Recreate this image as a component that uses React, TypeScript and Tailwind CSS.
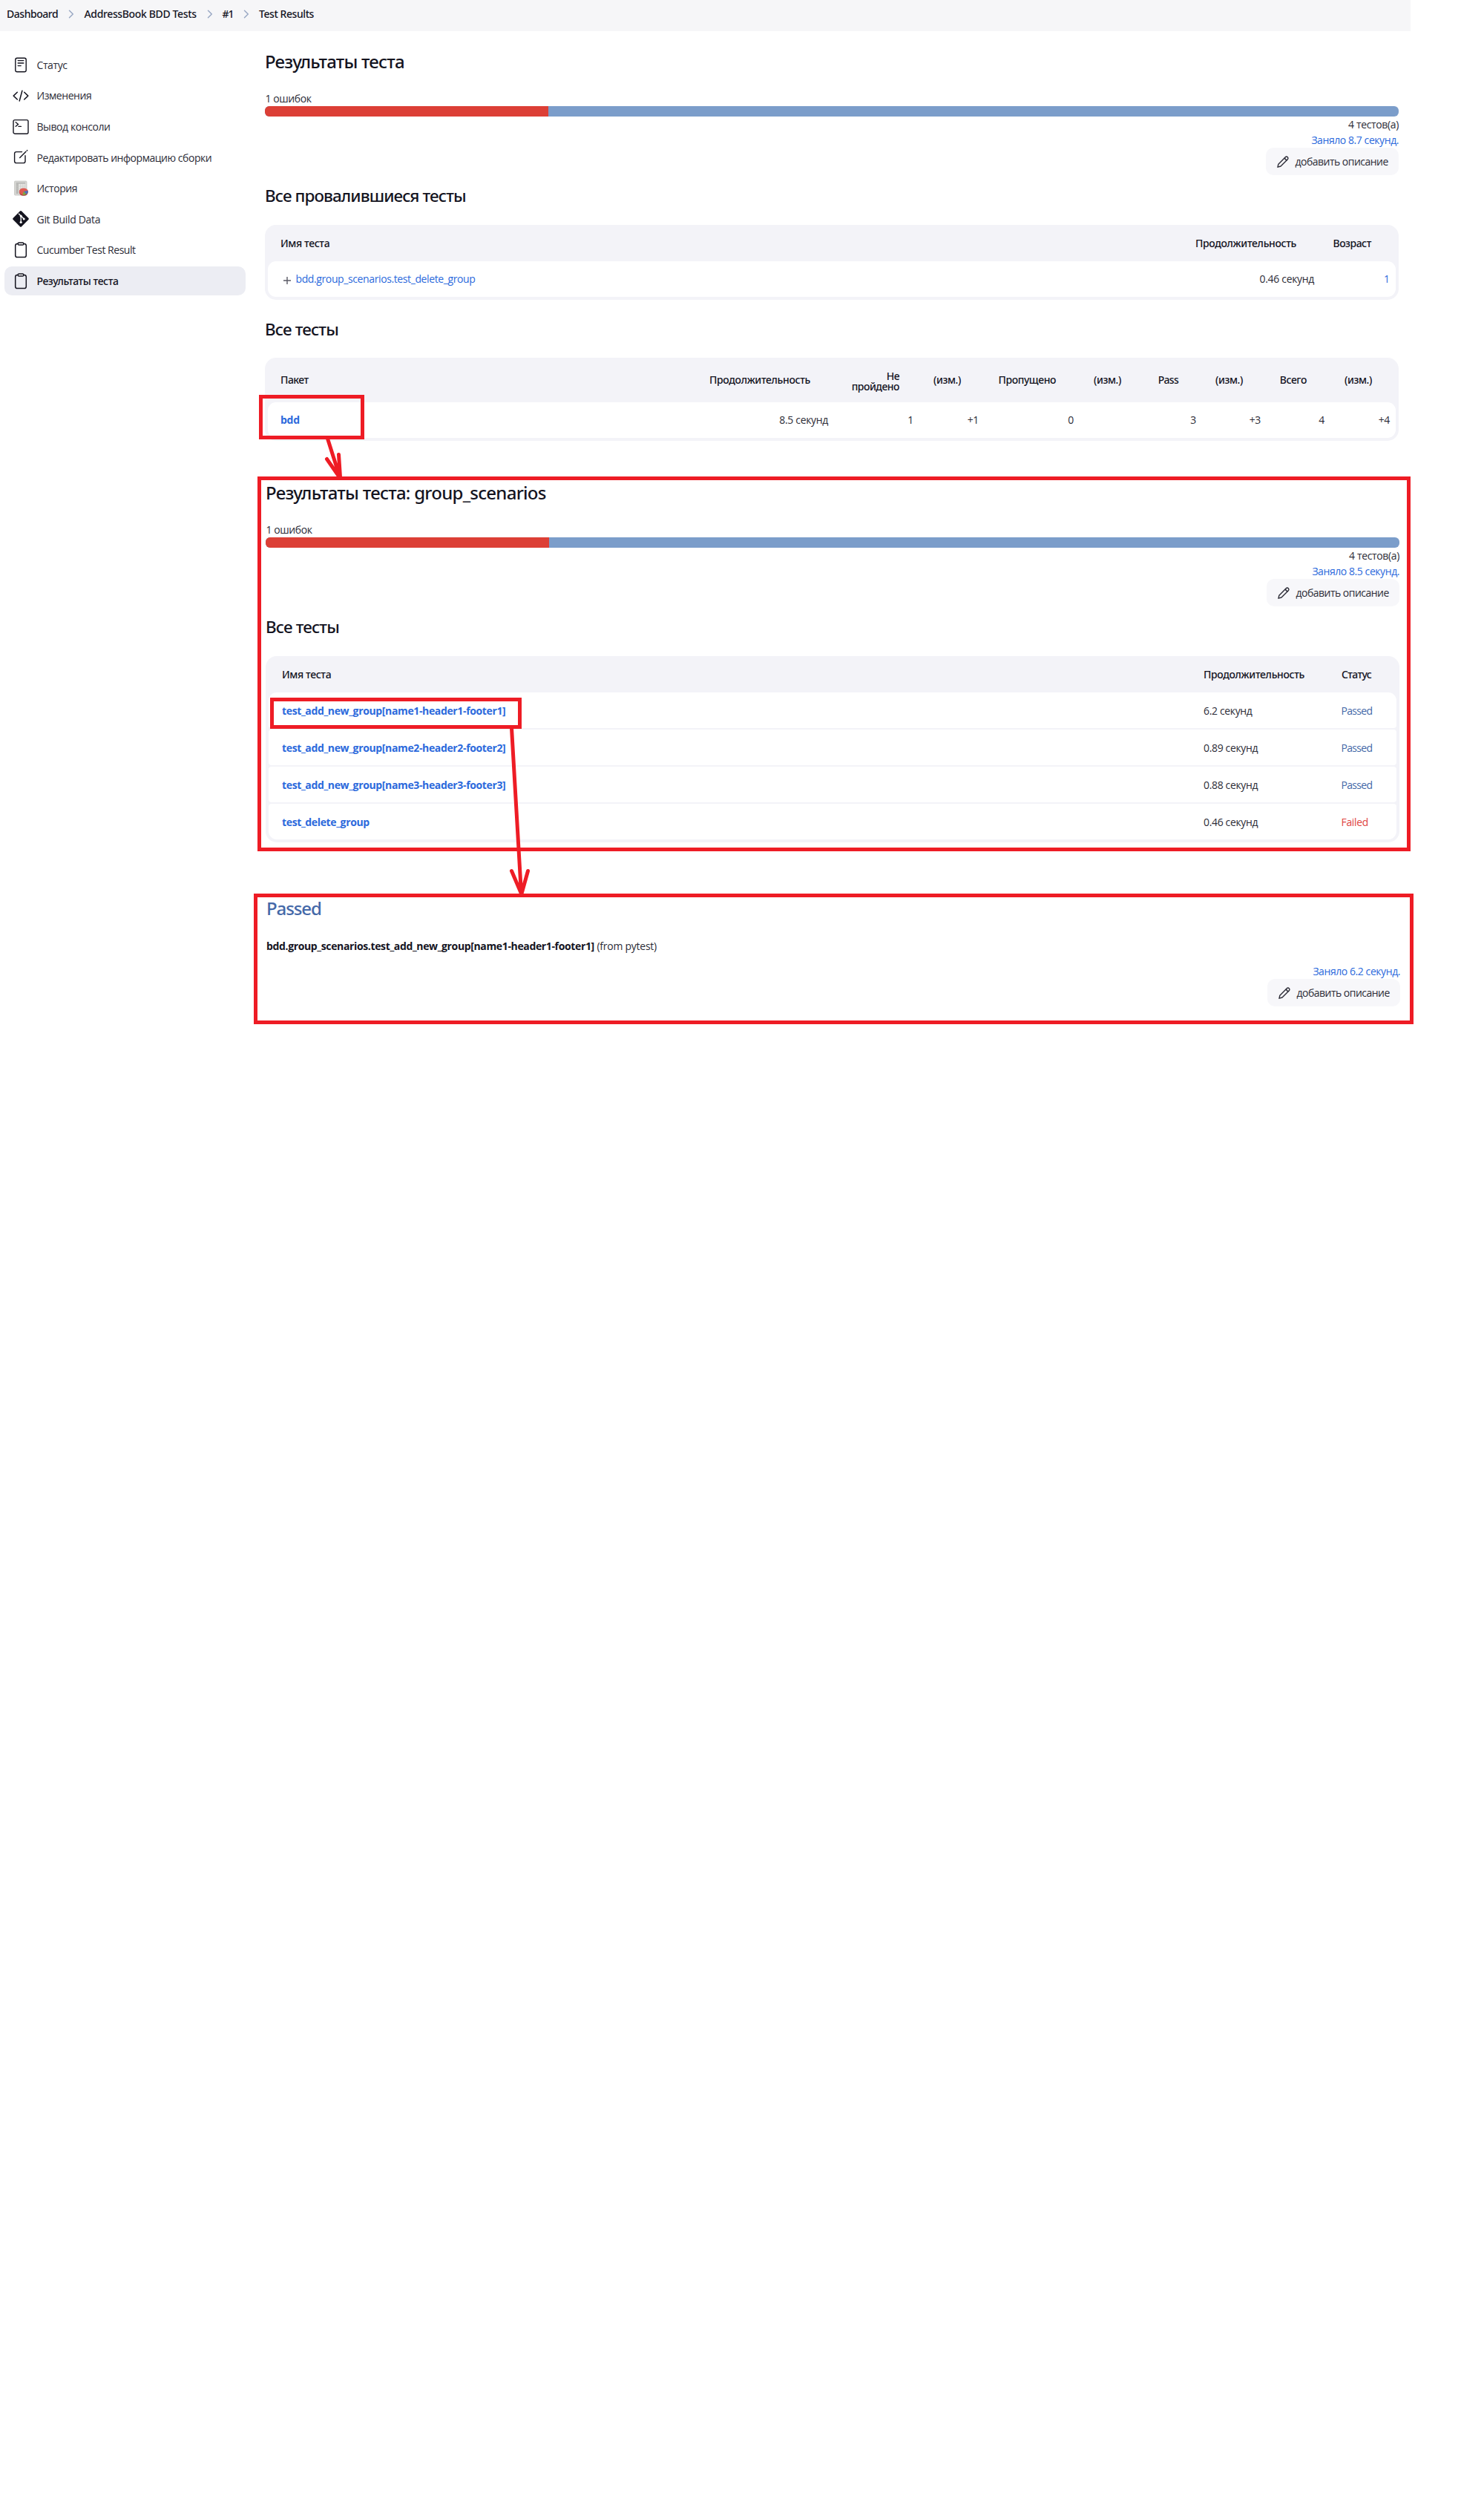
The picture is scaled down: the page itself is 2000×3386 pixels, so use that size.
import React from 'react';

const stroke = {
  fill: 'none',
  stroke: 'currentColor',
  strokeLinecap: 'round' as const,
  strokeLinejoin: 'round' as const,
};

function Icon({ children }: { children: React.ReactNode }) {
  return (
    <svg viewBox="0 0 22 22" className="h-[22px] w-[22px] shrink-0 text-[#14141f]">
      {children}
    </svg>
  );
}

const StatusIcon = () => (
  <Icon>
    <g {...stroke} strokeWidth="1.4">
      <rect x="3.8" y="1.2" width="14.4" height="18.6" rx="2.2" />
      <path d="M7.2 4.6h7.6M7.2 8h7.6M7.2 11.600h4" />
    </g>
  </Icon>
);
const CodeIcon = () => (
  <Icon>
    <g {...stroke} strokeWidth="1.5">
      <path d="M6.300 6.200L1.200 11.100l5.100 4.900M15.700 6.200l5.100 4.900-5.100 4.900M12.900 4.200L9.200 18" />
    </g>
  </Icon>
);
const ConsoleIcon = () => (
  <Icon>
    <g {...stroke} strokeWidth="1.4">
      <rect x="1" y="1.600" width="20" height="18.600" rx="2" />
      <path d="M4.200 4.800L7.600 7.500l-3.400 2.800M8 10.400h3.400" />
    </g>
  </Icon>
);
const EditIcon = () => (
  <Icon>
    <g {...stroke} strokeWidth="1.4">
      <path d="M12.600 3.600H5A2.400 2.400 0 0 0 2.600 6v10.200a2.400 2.400 0 0 0 2.400 2.400h9.600a2.400 2.400 0 0 0 2.400-2.400V8.600" />
      <path d="M9.700 11.600L17.900 3.300M19.300 2l.4-.4" />
    </g>
  </Icon>
);
const HistoryIcon = () => (
  <Icon>
    <rect x="2.500" y="1" width="16.500" height="19" rx="1" fill="#d8d8d4" stroke="#c4c4c0" strokeWidth=".8" />
    <rect x="4.500" y="2.800" width="12.500" height="15" fill="#e9e9e6" />
    <path d="M4.500 2.800h12.500v2h-9V18H4.500z" fill="#b9b9b7" />
    <path d="M8 5v12M10.500 5v8M13 5v6M15.500 5v6M4.500 8h12.500M4.500 11h12.500" stroke="#c6c6c3" strokeWidth=".6" />
    <ellipse cx="14.800" cy="16" rx="6" ry="4.800" fill="#a83a35" />
    <ellipse cx="14.800" cy="15" rx="6" ry="4.500" fill="#de5a52" />
    <path d="M14.800 15l5.800-1.200a5 4.500 0 0 1-2.300 5z" fill="#4f70b8" />
    <path d="M14.800 15l3.500 3.800a6 4.500 0 0 1-4.800.7z" fill="#7cae3c" />
  </Icon>
);
const GitIcon = () => (
  <Icon>
    <path
      d="M9.900.6a1.600 1.600 0 0 1 2.200 0l9.200 9.200a1.600 1.600 0 0 1 0 2.200L12.100 21.200a1.600 1.600 0 0 1-2.200 0L.7 12a1.600 1.600 0 0 1 0-2.200z"
      fill="currentColor"
    />
    <path d="M8 3.700l3.200 3.200V15.400M11.400 7l3.600 3.800" stroke="#fff" strokeWidth="1.300" fill="none" />
    <circle cx="11.200" cy="7" r="1.500" fill="#fff" />
    <circle cx="11.200" cy="15.500" r="1.600" fill="#fff" />
    <circle cx="15.200" cy="11" r="1.500" fill="#fff" />
  </Icon>
);
const ClipboardIcon = () => (
  <Icon>
    <g {...stroke} strokeWidth="1.500">
      <rect x="3.700" y="2.400" width="14.600" height="18.200" rx="2.600" />
      <rect x="7.200" y="1" width="7.600" height="3" rx="1.300" fill="#fff" />
    </g>
  </Icon>
);

const menu = [
  { label: 'Статус', icon: <StatusIcon />, cls: 'tracking-[-0.4px]' },
  { label: 'Изменения', icon: <CodeIcon />, cls: 'tracking-[-0.45px]' },
  { label: 'Вывод консоли', icon: <ConsoleIcon />, cls: 'tracking-[-0.42px]' },
  { label: 'Редактировать информацию сборки', icon: <EditIcon />, cls: 'tracking-[-0.46px]' },
  { label: 'История', icon: <HistoryIcon />, cls: 'tracking-[-0.42px]' },
  { label: 'Git Build Data', icon: <GitIcon />, cls: 'tracking-[-0.3px]' },
  { label: 'Cucumber Test Result', icon: <ClipboardIcon />, cls: 'tracking-[-0.48px]' },
  { label: 'Результаты теста', icon: <ClipboardIcon />, cls: 'tracking-[-0.44px]', active: true },
];

// Medium-weight text is set in Noto Sans, which carries a true 500 weight.
const medium = "font-['Noto_Sans','Open_Sans',sans-serif] font-medium text-[#14141f] ";

function Chevron() {
  return (
    <svg viewBox="0 0 8 12" className="h-3 w-2 text-[#9aa9c4]">
      <path d="M1.500 1.200L6.300 6l-4.800 4.800" {...stroke} strokeWidth="1.500" />
    </svg>
  );
}

function Breadcrumbs() {
  return (
    <nav className={medium + 'flex h-[42px] w-[1901px] items-center bg-[#f6f6f8] pb-1 pl-[9px]'}>
      <span className="w-[83px] tracking-[-0.46px]">Dashboard</span>
      <Chevron />
      <span className="ml-[13.500px] w-[165px] tracking-[-0.36px]">AddressBook BDD Tests</span>
      <Chevron />
      <span className="ml-[13px] w-[28px] tracking-[-1px]">#1</span>
      <Chevron />
      <span className="ml-[13.500px] tracking-[-0.43px]">Test Results</span>
    </nav>
  );
}

function Sidebar() {
  return (
    <aside className="ml-[6px] flex w-[325px] shrink-0 flex-col gap-[2.600px] pt-[26px]">
      {menu.map((m) => (
        <a
          key={m.label}
          className={
            'flex h-[39px] items-center gap-[10.500px] rounded-[10px] pl-[11px] ' +
            (m.active ? medium + 'bg-[#ecedf3] ' : '') +
            m.cls
          }
        >
          {m.icon}
          <span className="pt-[0.500px]">{m.label}</span>
        </a>
      ))}
    </aside>
  );
}

function AddDescription() {
  return (
    <button className="flex h-[37px] w-[179px] items-center self-end rounded-[10px] bg-[#f7f7fa] pl-[14px] tracking-[-0.52px] whitespace-nowrap">
      <svg viewBox="0 0 18 18" className="mr-[7.500px] h-[18px] w-[18px]">
        <g {...stroke} strokeWidth="1.400">
          <path d="M2 16.200l.9-4L12.300 2.700a2.100 2.100 0 0 1 3 0 2.100 2.100 0 0 1 0 3L6 15z" />
          <path d="M11.500 3.600c.2 1.800 1.200 2.800 3 3" />
        </g>
      </svg>
      добавить описание
    </button>
  );
}

function ResultBar({ seconds }: { seconds: string }) {
  return (
    <>
      <div className="mt-6 h-5 pl-[0.500px] leading-5 tracking-[-0.42px]">1 ошибок</div>
      <div className="flex h-[14px] overflow-hidden rounded-[6px] bg-[#7b9dca]">
        <div className="w-1/4 bg-[#dc3f36]" />
      </div>
      <div className="flex h-[42px] flex-col items-end pt-px leading-[20.500px]">
        <span className="tracking-[-0.36px]">4 тестов(а)</span>
        <a className="tracking-[-0.430px] text-[#2b69dc]">Заняло {seconds} секунд.</a>
      </div>
      <AddDescription />
    </>
  );
}

const h1 = medium + 'h-8 text-2xl leading-8';
const h2 = medium + 'h-[30px] pt-px text-[22.400px] leading-[30px]';
const table = 'flex flex-col rounded-[15px] bg-[#f3f3f8] px-1 pb-1';

const headings = [
  { t: 'Продолжительность', c: 'tracking-[-0.36px]' },
  { t: 'Не пройдено', c: 'w-[75px] whitespace-normal leading-[14px] pt-[3px] -mr-[5px] tracking-[-0.5px]' },
  { t: '(изм.)', c: 'tracking-[-0.4px]' },
  { t: 'Пропущено', c: 'tracking-[-0.42px]' },
  { t: '(изм.)', c: 'tracking-[-0.4px]' },
  { t: 'Pass', c: 'tracking-[-0.700px]' },
  { t: '(изм.)', c: 'tracking-[-0.4px]' },
  { t: 'Всего', c: 'tracking-[-0.45px]' },
  { t: '(изм.)', c: 'tracking-[-0.4px]' },
];
const values = ['8.5 секунд', '1', '+1', '0', '', '3', '+3', '4', '+4'];
const packageCols =
  'grid grid-cols-[595px_160px_115px_88px_128px_88px_77px_87px_86px_88px] items-center text-right whitespace-nowrap';

const tests = [
  { name: 'test_add_new_group[name1-header1-footer1]', time: '6.2', ok: true, r: 'rounded-[4px] rounded-t-[11px]' },
  { name: 'test_add_new_group[name2-header2-footer2]', time: '0.89', ok: true, r: 'rounded-[4px]' },
  { name: 'test_add_new_group[name3-header3-footer3]', time: '0.88', ok: true, r: 'rounded-[4px]' },
  { name: 'test_delete_group', time: '0.46', ok: false, r: 'rounded-[4px] rounded-b-[11px]' },
];

function Annotations() {
  return (
    <>
      <div className="absolute top-[532px] left-[349px] h-[60px] w-[142px] border-5 border-[#ee1c25]" />
      <div className="absolute top-[940px] left-[364px] h-[42px] w-[339px] border-5 border-[#ee1c25]" />
      <svg viewBox="0 0 800 1250" className="absolute top-0 left-0 h-[1250px] w-[800px]">
        <g fill="none" stroke="#ee1c25" strokeWidth="5" strokeLinecap="round" strokeLinejoin="round">
          <path d="M441.500 591L458 643M440.500 618.500L457.500 643M456.500 612.500L458.500 643" />
          <path d="M689.500 981L702.500 1204M689.500 1173.500L702.500 1204M711.500 1173.500L703 1204" />
        </g>
      </svg>
    </>
  );
}

export default function App() {
  return (
    <div className="relative h-[3386px] w-[2000px] overflow-hidden bg-white font-['Open_Sans','Noto_Sans',sans-serif] text-sm text-[#2c2c37]">
      <Breadcrumbs />
      <div className="flex">
        <Sidebar />
        <main className="ml-[11px] flex w-[1563px] flex-col">
          <section className="ml-[15px] flex w-[1528px] flex-col pt-[25px]">
            <h1 className={h1 + ' tracking-[-0.8px]'}>Результаты теста</h1>
            <ResultBar seconds="8.7" />

            <h2 className={h2 + ' mt-3 tracking-[-0.88px]'}>Все провалившиеся тесты</h2>
            <div className={table + ' mt-[25px]'}>
              <div className={medium + 'grid h-[49px] grid-cols-[1233px_185.500px_1fr] items-center pl-[17px]'}>
                <span className="tracking-[-0.38px]">Имя теста</span>
                <span className="tracking-[-0.35px]">Продолжительность</span>
                <span className="tracking-[-0.5px]">Возраст</span>
              </div>
              <div className="flex h-12 items-center rounded-[11px] bg-white pl-[20px]">
                <svg viewBox="0 0 12 12" className="mt-[3px] mr-[5.500px] h-3 w-3">
                  <path d="M6 1v10M1 6h10" stroke="#5b5b66" strokeWidth="1.400" />
                </svg>
                <a className="tracking-[-0.39px] text-[#2b69dc]">bdd.group_scenarios.test_delete_group</a>
                <span className="ml-auto w-[75px] text-right tracking-[-0.33px]">0.46 секунд</span>
                <a className="w-[110px] pr-[8px] text-right text-[#2b69dc]">1</a>
              </div>
            </div>

            <h2 className={h2 + ' mt-6 tracking-[-0.85px]'}>Все тесты</h2>
            <div className={table + ' mt-6'}>
              <div className={medium + packageCols + ' h-[60px]'}>
                <span className="pl-[17px] text-left tracking-[-0.5px]">Пакет</span>
                {headings.map((h, i) => (
                  <span key={i} className="flex justify-end pr-6">
                    <span className={h.c}>{h.t}</span>
                  </span>
                ))}
              </div>
              <div className={packageCols + ' h-12 rounded-[11px] bg-white'}>
                <a className="pl-[17px] text-left font-bold tracking-[-0.25px] text-[#2b69dc]">bdd</a>
                {values.map((v, i) => (
                  <span key={i} className="tracking-[-0.33px]">
                    {v}
                  </span>
                ))}
              </div>
            </div>
          </section>

          <section className="mt-12 ml-[5px] flex h-[505px] w-[1554px] flex-col border-5 border-[#ee1c25] pt-px pr-[10px] pl-[6px]">
            <h1 className={h1 + ' tracking-[-0.73px]'}>Результаты теста: group_scenarios</h1>
            <ResultBar seconds="8.5" />
            <h2 className={h2 + ' mt-3 tracking-[-0.85px]'}>Все тесты</h2>
            <div className={table + ' mt-[25px]'}>
              <div className={medium + 'grid h-[49px] grid-cols-[1242px_186px_1fr] items-center pt-px pl-[18px]'}>
                <span className="tracking-[-0.38px]">Имя теста</span>
                <span className="tracking-[-0.35px]">Продолжительность</span>
                <span className="tracking-[-0.65px]">Статус</span>
              </div>
              <div className="flex flex-col gap-0.5">
                {tests.map((t) => (
                  <div
                    key={t.name}
                    className={'grid h-12 grid-cols-[1242px_185.500px_1fr] items-center bg-white pt-px pl-[18px] ' + t.r}
                  >
                    <a className="font-bold tracking-[-0.36px] text-[#2b69dc]">{t.name}</a>
                    <span className="tracking-[-0.35px]">{t.time} секунд</span>
                    <span className={t.ok ? 'tracking-[-0.700px] text-[#4468a8]' : 'tracking-[-0.35px] text-[#e0433f]'}>
                      {t.ok ? 'Passed' : 'Failed'}
                    </span>
                  </div>
                ))}
              </div>
            </div>
          </section>

          <section className="mt-[57px] flex h-[176px] flex-col border-5 border-[#ee1c25] pr-[13px] pl-[12px]">
            <h1 className="-mt-px h-8 font-['Noto_Sans','Open_Sans',sans-serif] text-2xl leading-8 font-medium tracking-[-1.100px] text-[#4468a8]">
              Passed
            </h1>
            <p className="mt-6 h-5 pt-px leading-5">
              <b className="tracking-[-0.36px] text-[#14141f]">
                bdd.group_scenarios.test_add_new_group[name1-header1-footer1]
              </b>{' '}
              <span className="tracking-[-0.26px]">(from pytest)</span>
            </p>
            <a className="mt-[15px] h-5 self-end leading-5 tracking-[-0.430px] text-[#2b69dc]">Заняло 6.2 секунд.</a>
            <AddDescription />
          </section>
        </main>
      </div>
      <Annotations />
    </div>
  );
}
